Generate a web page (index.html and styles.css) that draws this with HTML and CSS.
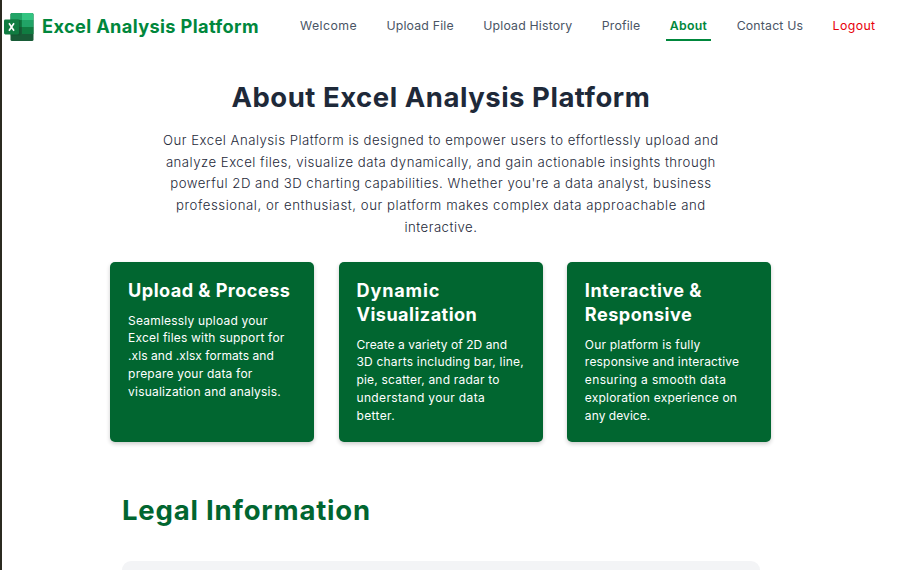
FILE: index.html
```html
<!DOCTYPE html>
<html lang="en">
<head>
<meta charset="utf-8">
<title>About Excel Analysis Platform</title>
<link rel="stylesheet" href="styles.css">
</head>
<body>
<header class="navbar">
  <svg class="logo" viewBox="0 0 30 30">
    <rect x="6.500" y="1" width="23" height="28" rx="1.500" fill="#185c37"/>
    <path d="M8 1h10v7H6.500V2.500A1.500 1.500 0 0 1 8 1z" fill="#21a366"/>
    <path d="M18 1h10a1.500 1.500 0 0 1 1.500 1.500V8H18z" fill="#33c481"/>
    <path d="M6.500 8H18v7H6.500z" fill="#107c41"/>
    <path d="M18 8h11.500v7H18z" fill="#21a366"/>
    <path d="M18 15h11.500v7H18z" fill="#107c41"/>
    <path d="M6.500 7.500H15a1.500 1.500 0 0 1 1.500 1.500v13a1.500 1.500 0 0 1-1.500 1.500H6.500z" fill="#0b4f2c" opacity=".5"/>
    <rect y="7.500" width="15" height="15" rx="1.400" fill="#107c41"/>
    <path d="M5 11.200l5 7.600M10 11.200l-5 7.600" stroke="#fff" stroke-width="1.600" fill="none"/>
  </svg>
  <span class="brand">Excel Analysis Platform</span>
  <nav class="links">
    <a>Welcome</a>
    <a>Upload File</a>
    <a>Upload History</a>
    <a>Profile</a>
    <a class="active">About</a>
    <a>Contact Us</a>
    <a class="logout">Logout</a>
  </nav>
</header>
<main>
  <section class="about">
    <h1>About Excel Analysis Platform</h1>
    <p class="intro">
      <span>Our Excel Analysis Platform is designed to empower users to effortlessly upload and</span>
      <span>analyze Excel files, visualize data dynamically, and gain actionable insights through</span>
      <span>powerful 2D and 3D charting capabilities. Whether you're a data analyst, business</span>
      <span class="wide">professional, or enthusiast, our platform makes complex data approachable and</span>
      <span>interactive.</span>
    </p>
    <div class="cards">
      <article class="card">
        <h2>Upload &amp; Process</h2>
        <p>
          <span>Seamlessly upload your</span>
          <span>Excel files with support for</span>
          <span class="tight">.xls and .xlsx formats and</span>
          <span>prepare your data for</span>
          <span>visualization and analysis.</span>
        </p>
      </article>
      <article class="card">
        <h2><span class="wide">Dynamic</span><span>Visualization</span></h2>
        <p>
          <span class="tight">Create a variety of 2D and</span>
          <span>3D charts including bar, line,</span>
          <span>pie, scatter, and radar to</span>
          <span class="wide">understand your data</span>
          <span class="wide">better.</span>
        </p>
      </article>
      <article class="card">
        <h2><span>Interactive &amp;</span><span>Responsive</span></h2>
        <p>
          <span>Our platform is fully</span>
          <span>responsive and interactive</span>
          <span class="wide">ensuring a smooth data</span>
          <span>exploration experience on</span>
          <span class="tight">any device.</span>
        </p>
      </article>
    </div>
  </section>
  <section class="legal">
    <h2 class="legal-title">Legal Information</h2>
    <div class="panel"></div>
  </section>
</main>
</body>
</html>
```
FILE: styles.css
```css
* { box-sizing: border-box; margin: 0; }
body {
  height: 570px;
  overflow: hidden;
  border-left: 2px solid #2b2a20;
  background: #fff;
  font-family: Inter, "Liberation Sans", sans-serif;
  white-space: nowrap;
}

.navbar { height: 53px; display: flex; align-items: center; padding-left: 1.5px; }
.logo { width: 30px; height: 30px; flex: none; }
.brand {
  width: 217px;
  margin: 0 0 2px 8.5px;
  color: #00873c;
  font-size: 18.2px;
  font-weight: 700;
  letter-spacing: 0.36px;
}
.links { display: flex; gap: 22.4px; margin-left: 37.5px; font-size: 12.3px; color: #4a5565; letter-spacing: 0.18px; }
.links a { height: 31px; padding: 8px 3.5px 0; line-height: 15px; border-bottom: 2px solid transparent; margin-bottom: 3px; }
.links a:first-child { letter-spacing: 0.43px; }
.links .active { color: #00873c; font-weight: 600; letter-spacing: 0.3px; border-color: #00873c; }
.links .logout { color: #e7000b; letter-spacing: 0.4px; }

.about { width: 661px; margin: 28px 0 0 108.4px; }
h1 { font-size: 27.5px; line-height: 32px; font-weight: 700; color: #1e2939; text-align: center; letter-spacing: 0.52px; }
.intro {
  margin-top: 16.9px;
  font-size: 13.2px;
  line-height: 21.7px;
  font-weight: 300;
  color: #1e2939;
  text-align: center;
  letter-spacing: 0.49px;
}
.intro span, .card span { display: block; }
.intro .wide { letter-spacing: 0.56px; }

.cards { display: grid; grid-template-columns: repeat(3, 204px); gap: 24.4px; margin-top: 23.8px; }
.card {
  height: 180px;
  padding: 16px 0 0 17.7px;
  border-radius: 5px;
  background: #016630;
  color: #fff;
  box-shadow: 0 2px 4px rgba(0, 0, 0, 0.2);
}
.card h2 { font-size: 18.1px; line-height: 24px; font-weight: 700; letter-spacing: 0.46px; }
.card h2 .wide { letter-spacing: 0.85px; }
.card p { margin-top: 9.5px; font-size: 12px; line-height: 17.7px; letter-spacing: 0.2px; }
.card p .tight { letter-spacing: 0.06px; }
.card p .wide { letter-spacing: 0.36px; }

.legal { width: 638px; margin: 52px 0 0 120px; }
.legal-title { font-size: 27.5px; line-height: 32px; font-weight: 700; color: #016630; letter-spacing: 0.8px; }
.panel { height: 8.5px; margin-top: 35px; border-radius: 9px 9px 0 0; background: #f3f4f6; }
```
